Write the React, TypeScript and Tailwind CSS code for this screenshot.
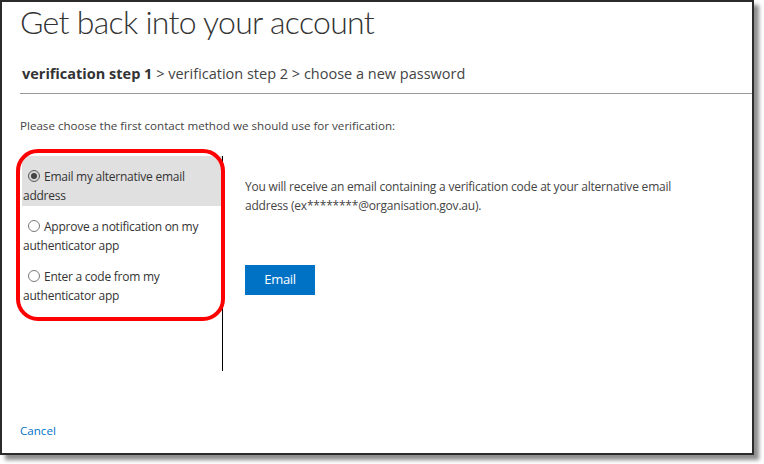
const options = [
  { label: 'Email my alternative email address', selected: true },
  { label: 'Approve a notification on my authenticator app', selected: false },
  { label: 'Enter a code from my authenticator app', selected: false },
]

const Radio = ({ checked }: { checked: boolean }) => (
  <span
    className={`relative ml-[5px] mr-[4px] inline-block h-[12px] w-[12px] rounded-full border align-[-1px] ${
      checked ? 'border-[#5c5c5c] bg-[#d4d4d4]' : 'border-[#7a7a7a] bg-white'
    }`}
  >
    {checked && <span className="absolute left-[2px] top-[2px] h-[6px] w-[6px] rounded-full bg-[#444]" />}
  </span>
)

export default function App() {
  return (
    <div className="h-[464px] w-[764px] bg-white font-['Open_Sans',sans-serif]">
      <div className="flex h-[455px] w-[754px] flex-col border-2 border-[#2b2b2b] bg-white shadow-[5px_5px_4px_rgba(0,0,0,0.45)]">
        <h1 className="ml-[18px] text-[32px] leading-[40px] tracking-[-0.7px] text-[#333] [font-family:Lato,sans-serif] [font-weight:300]">
          Get back into your account
        </h1>

        <div className="ml-[20px] mt-[22px] text-[14.5px] leading-[20px] text-[#444]">
          <span className="font-bold text-[#333]">verification step 1</span> &gt; verification step 2 &gt; choose a new
          password
        </div>

        <div className="ml-[18px] mt-[9px] h-px bg-[#999]" />

        <p className="ml-[18px] mt-[24px] text-[11.6px] leading-[16px] text-[#444]">
          Please choose the first contact method we should use for verification:
        </p>

        <div className="ml-[20px] mt-[22px] flex h-[215px]">
          <div className="relative w-[201px] border-r border-black">
            {options.map((o) => (
              <div
                key={o.label}
                className={`h-[50px] w-[200px] pl-px pr-2 pt-[11px] text-[12px] leading-[19px] tracking-[-0.25px] text-[#333] ${
                  o.selected ? 'bg-[#e0e0e0]' : ''
                }`}
              >
                <Radio checked={o.selected} />
                {o.label}
              </div>
            ))}
            <div className="absolute -left-[6px] -top-[7px] h-[172px] w-[209px] rounded-[22px] border-4 border-[#f00]" />
          </div>

          <div className="flex-1 pl-[22px] pt-[21px]">
            <p className="w-[450px] text-[12px] leading-[19px] tracking-[-0.2px] text-[#444]">
              You will receive an email containing a verification code at your alternative email address
              (ex********@organisation.gov.au).
            </p>
            <button className="mt-[50px] h-[30px] w-[70px] bg-[#0072c6] text-[13px] tracking-[-0.3px] text-white">
              Email
            </button>
          </div>
        </div>

        <a className="ml-[18px] mt-[52px] text-[11.6px] leading-[16px] text-[#0072c6]" href="#">
          Cancel
        </a>
      </div>
    </div>
  )
}
